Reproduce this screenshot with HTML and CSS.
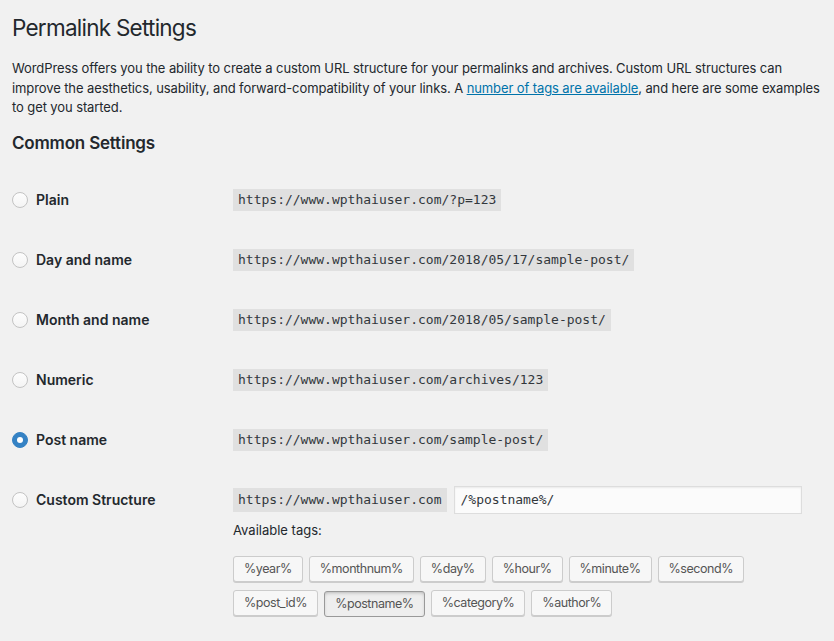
FILE: index.html
```html
<!DOCTYPE html>
<html>
<head>
<meta charset="utf-8">
<title>Permalink Settings</title>
<link rel="stylesheet" href="styles.css">
</head>
<body>
<div class="wrap">
  <h1 class="title">Permalink Settings</h1>
  <p class="intro">WordPress offers you the ability to create a custom URL structure for your permalinks and archives. Custom URL structures can improve the aesthetics, usability, and forward-compatibility of your links. A <a href="#">number of tags are available</a>, and here are some examples to get you started.</p>
  <h2 class="section">Common Settings</h2>

  <div class="rows">
    <div class="row">
      <label class="opt"><span class="radio"></span>Plain</label>
      <div class="val"><code class="url">https://www.wpthaiuser.com/?p=123</code></div>
    </div>
    <div class="row">
      <label class="opt"><span class="radio"></span>Day and name</label>
      <div class="val"><code class="url">https://www.wpthaiuser.com/2018/05/17/sample-post/</code></div>
    </div>
    <div class="row">
      <label class="opt"><span class="radio"></span>Month and name</label>
      <div class="val"><code class="url">https://www.wpthaiuser.com/2018/05/sample-post/</code></div>
    </div>
    <div class="row">
      <label class="opt"><span class="radio"></span>Numeric</label>
      <div class="val"><code class="url">https://www.wpthaiuser.com/archives/123</code></div>
    </div>
    <div class="row">
      <label class="opt"><span class="radio checked"></span>Post name</label>
      <div class="val"><code class="url">https://www.wpthaiuser.com/sample-post/</code></div>
    </div>
    <div class="row custom">
      <label class="opt"><span class="radio"></span>Custom Structure</label>
      <div class="val">
        <div class="struct">
          <code class="url">https://www.wpthaiuser.com</code>
          <input class="field" type="text" value="/%postname%/">
        </div>
        <div class="avail">Available tags:</div>
        <div class="tags">
          <button class="tag">%year%</button>
          <button class="tag">%monthnum%</button>
          <button class="tag">%day%</button>
          <button class="tag">%hour%</button>
          <button class="tag">%minute%</button>
          <button class="tag">%second%</button>
          <button class="tag">%post_id%</button>
          <button class="tag active">%postname%</button>
          <button class="tag">%category%</button>
          <button class="tag">%author%</button>
        </div>
      </div>
    </div>
  </div>
</div>
</body>
</html>
```
FILE: styles.css
```css
html, body {
  margin: 0;
  padding: 0;
  background: #f1f1f1;
}
body {
  font-family: Inter, "Noto Sans", "Liberation Sans", sans-serif;
  font-size: 13px;
  color: #23282d;
}
.wrap {
  padding: 0 4px 0 12px;
}
.title {
  margin: 0;
  padding-top: 13px;
  font-size: 22.5px;
  font-weight: 400;
  letter-spacing: -0.75px;
  line-height: 30px;
  color: #23282d;
}
.intro {
  margin: 16px 0 0 0;
  line-height: 19.5px;
  letter-spacing: -0.1px;
}
.intro a {
  color: #0073aa;
  text-decoration: underline;
}
.section {
  margin: 14px 0 0 0;
  font-size: 17px;
  font-weight: 600;
  letter-spacing: -0.2px;
  line-height: 22px;
}
.rows {
  margin-top: 16px;
}
.row {
  display: flex;
  align-items: flex-start;
  padding: 19px 0;
}
.opt {
  width: 221px;
  flex: none;
  display: flex;
  align-items: center;
  gap: 8px;
  height: 22px;
  font-size: 14px;
  font-weight: 600;
  color: #23282d;
}
.radio {
  width: 16px;
  height: 16px;
  box-sizing: border-box;
  border-radius: 50%;
  border: 1px solid #c3c3c3;
  background: linear-gradient(#fdfdfd, #f4f4f4);
  flex: none;
  display: flex;
  align-items: center;
  justify-content: center;
}
.radio.checked {
  border-color: #3582c4;
  background: #3582c4;
}
.radio.checked::after {
  content: "";
  width: 6px;
  height: 6px;
  border-radius: 50%;
  background: #fff;
}
.val {
  flex: 1;
}
.url {
  display: inline-block;
  font-family: "DejaVu Sans Mono", "Liberation Mono", monospace;
  font-size: 13px;
  line-height: 22px;
  padding: 0 5px;
  background: rgba(0, 0, 0, 0.07);
  color: #32373c;
}
.custom {
  padding-top: 16px;
}
.custom .opt {
  height: 28px;
}
.struct {
  display: flex;
  align-items: center;
  gap: 7px;
  height: 28px;
}
.struct .url {
  line-height: 24px;
}
.field {
  width: 348px;
  height: 28px;
  box-sizing: border-box;
  border: 1px solid #ddd;
  background: #fbfbfb;
  box-shadow: inset 0 1px 2px rgba(0, 0, 0, 0.07);
  padding: 0 6px;
  margin: 0;
  font-family: "DejaVu Sans Mono", "Liberation Mono", monospace;
  font-size: 13px;
  color: #32373c;
  outline: none;
}
.avail {
  margin-top: 6px;
  line-height: 20px;
  color: #23282d;
}
.tags {
  margin-top: 16px;
  display: flex;
  flex-wrap: wrap;
  gap: 8px 6px;
  max-width: 530px;
}
.tag {
  height: 26px;
  box-sizing: border-box;
  margin: 0;
  padding: 0 10px;
  border: 1px solid #ccc;
  border-radius: 3px;
  background: #f7f7f7;
  box-shadow: 0 1px 0 #ccc;
  font-family: Inter, "Noto Sans", "Liberation Sans", sans-serif;
  font-size: 12.5px;
  letter-spacing: -0.45px;
  line-height: 24px;
  color: #555;
  cursor: pointer;
}
.tag.active {
  background: #eee;
  border-color: #999;
  box-shadow: inset 0 2px 5px -3px rgba(0, 0, 0, 0.5);
  transform: translateY(1px);
}
```
